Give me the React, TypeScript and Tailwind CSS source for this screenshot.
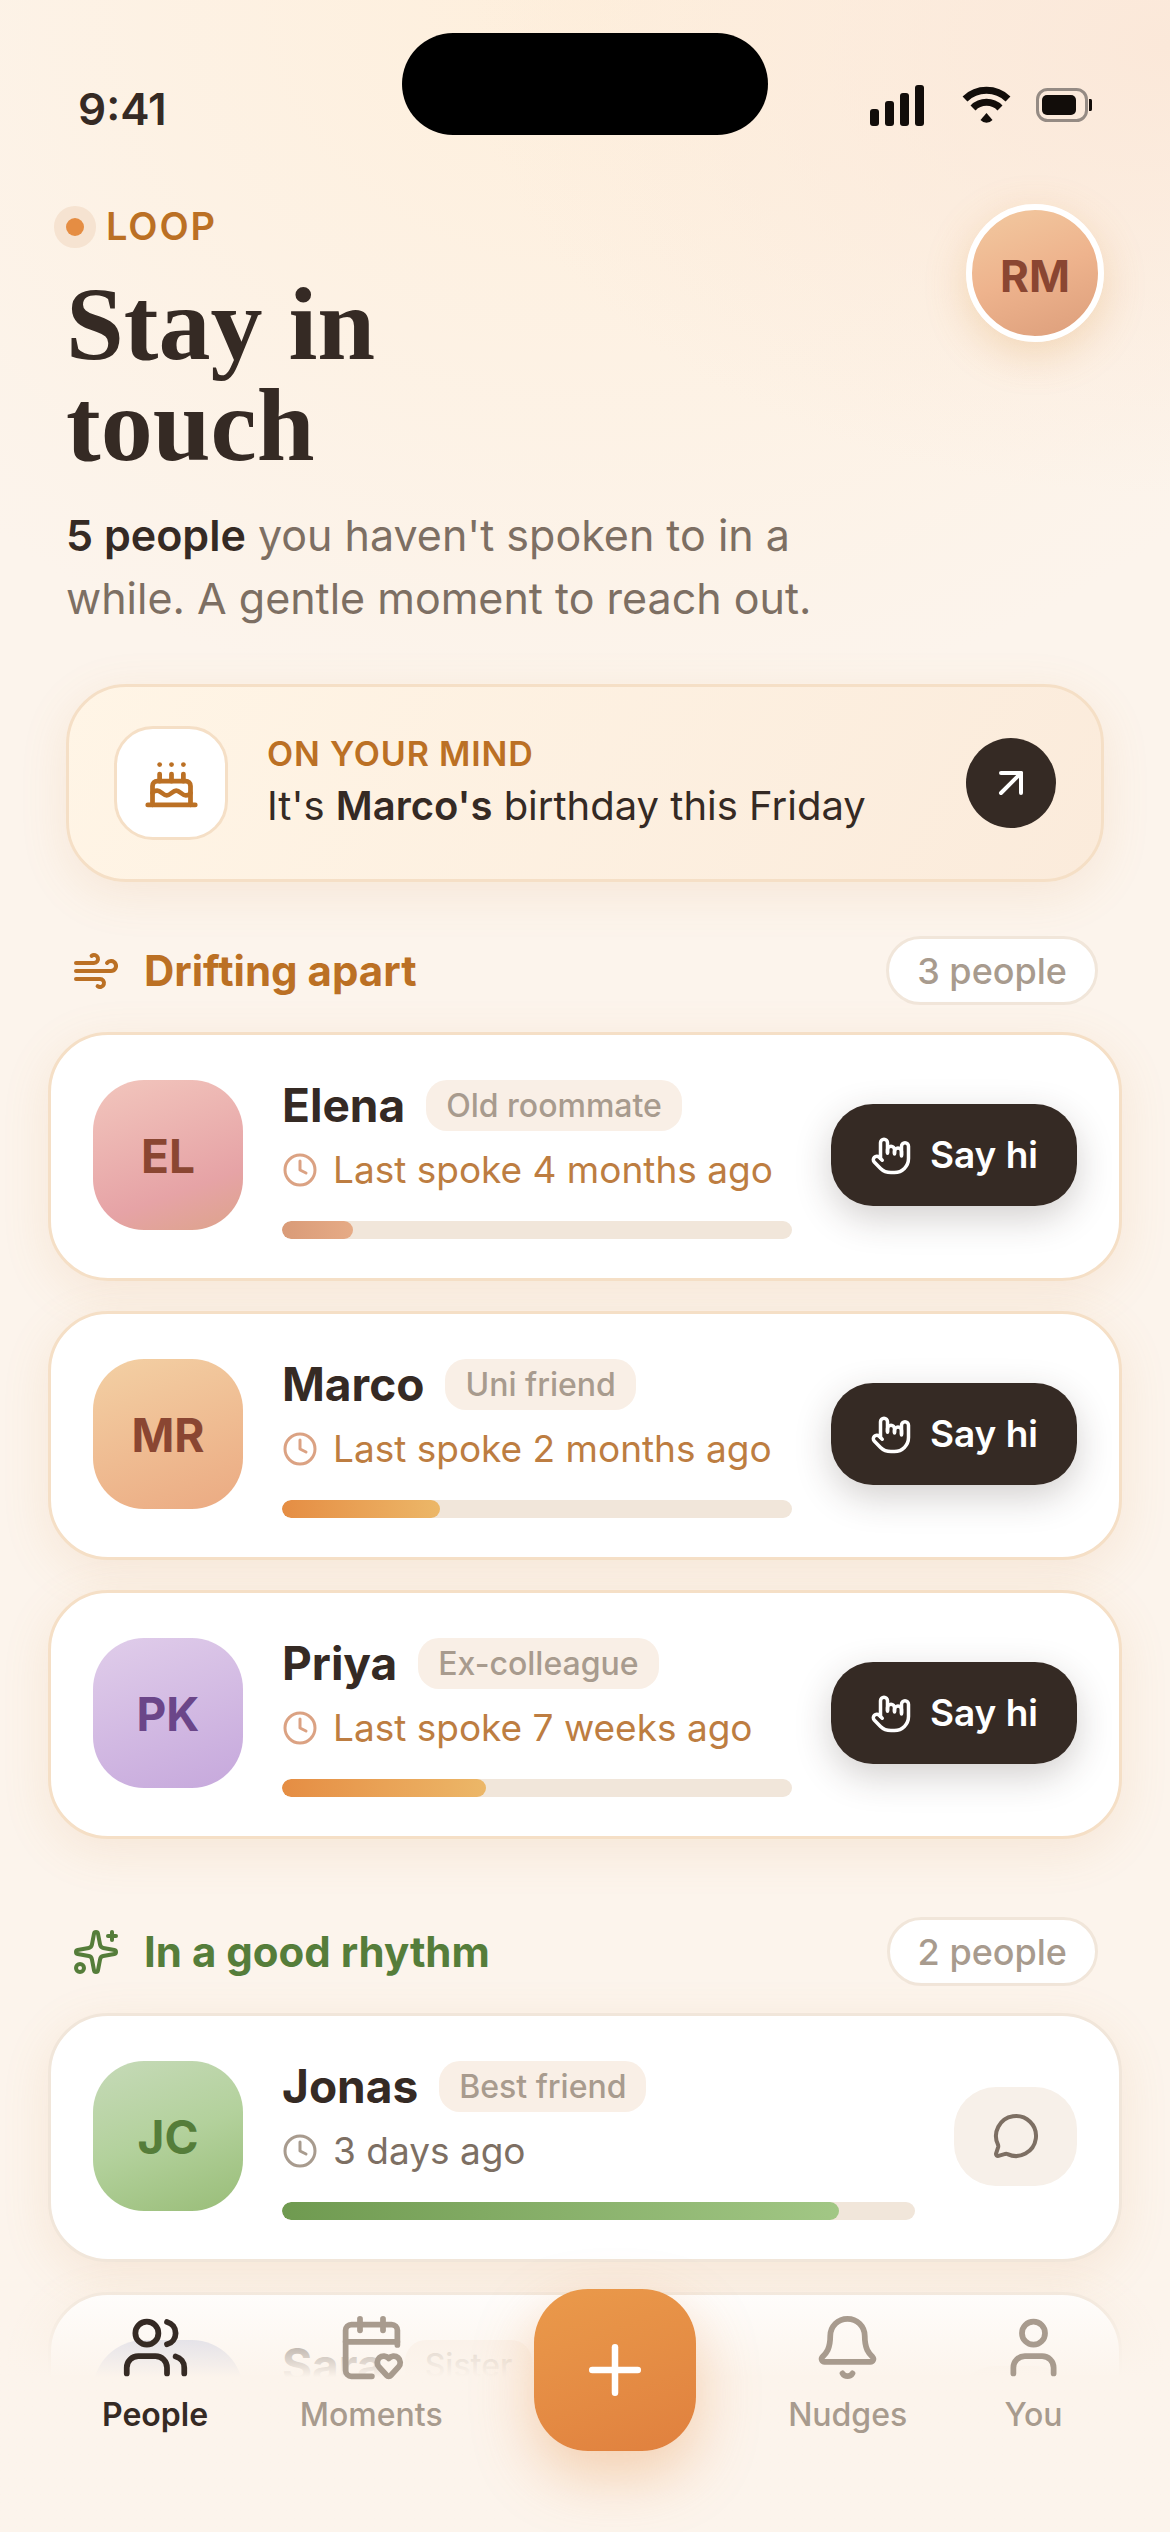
import type { ReactNode } from "react";
import {
  ArrowUpRight,
  Bell,
  Cake,
  CalendarHeart,
  Clock,
  HandMetal,
  MessageCircle,
  Plus,
  Sparkles,
  User,
  Users,
  Wind,
} from "lucide-react";
import type { LucideIcon } from "lucide-react";
import clsx from "clsx";

interface Person {
  initials?: string;
  name: string;
  tag: string;
  meta?: string;
  closeness: number;
  avatar: string;
  bar: string;
  drifting: boolean;
}

const DRIFTING: Person[] = [
  {
    initials: "EL",
    name: "Elena",
    tag: "Old roommate",
    meta: "Last spoke 4 months ago",
    closeness: 14,
    avatar: "from-[#f2c6bd] via-[#e6a3a6] via-70% to-[#dda38a] text-[#8a4632]",
    bar: "from-[#d99b78] to-[#e6ab86]",
    drifting: true,
  },
  {
    initials: "MR",
    name: "Marco",
    tag: "Uni friend",
    meta: "Last spoke 2 months ago",
    closeness: 31,
    avatar: "from-[#f3d0a4] to-[#ebaa82] text-[#8a4632]",
    bar: "from-[#e58d43] to-[#ecb768]",
    drifting: true,
  },
  {
    initials: "PK",
    name: "Priya",
    tag: "Ex-colleague",
    meta: "Last spoke 7 weeks ago",
    closeness: 40,
    avatar: "from-[#e0cdea] to-[#c6a8dc] text-[#6b4689]",
    bar: "from-[#e58d43] to-[#ecb768]",
    drifting: true,
  },
];

const STEADY: Person[] = [
  {
    initials: "JC",
    name: "Jonas",
    tag: "Best friend",
    meta: "3 days ago",
    closeness: 88,
    avatar: "from-[#c6dab8] via-[#b3d19c] to-[#99bd78] text-[#557d3a]",
    bar: "from-[#6f9a50] to-[#a2c785]",
    drifting: false,
  },
  {
    name: "Sara",
    tag: "Sister",
    closeness: 94,
    avatar: "from-[#c3cbe6] to-[#a3b0d8] text-[#46568a]",
    bar: "from-[#6f9a50] to-[#a2c785]",
    drifting: false,
  },
];

function StatusBar() {
  return (
    <div className="relative flex h-[180px] items-start justify-between pt-[84px] pr-[76px] pl-[78px]">
      <span className="text-[44px] leading-[50px] font-semibold">9:41</span>
      <div className="absolute top-[33px] left-1/2 h-[102px] w-[366px] -translate-x-1/2 rounded-full bg-black" />
      <svg className="h-[48px] w-[226px]" viewBox="0 0 226 48" fill="none">
        {/* signal */}
        <g fill="#120d0a">
          <rect x="2" y="25" width="9" height="17" rx="3" />
          <rect x="17" y="17" width="9" height="25" rx="3" />
          <rect x="32" y="9" width="9" height="33" rx="3" />
          <rect x="47" y="1" width="9" height="41" rx="3" />
        </g>
        {/* wifi */}
        <g stroke="#120d0a" strokeWidth="7">
          <path d="M97 15a31 31 0 0 1 43 0" />
          <path d="M105 24a19 19 0 0 1 27 0" />
        </g>
        <path d="M118.500 29l6 7a8 8 0 0 1-12 0z" fill="#120d0a" />
        {/* battery */}
        <rect x="169.500" y="5.500" width="49" height="31" rx="10" stroke="#958b84" strokeWidth="3" />
        <rect x="174" y="11" width="34" height="20" rx="5" fill="#120d0a" />
        <path d="M221 15h2a2 2 0 0 1 1 2v8a2 2 0 0 1-1 2h-2z" fill="#120d0a" />
      </svg>
    </div>
  );
}

function SectionHead({ icon: Icon, title, count, tone }: { icon: LucideIcon; title: string; count: string; tone: string }) {
  return (
    <div className="-mb-[3px] flex h-[69px] items-center justify-between px-6">
      <h2 className={clsx("flex items-center gap-[24px] text-[42px] leading-[60px] font-bold", tone)}>
        <Icon size={48} strokeWidth={2} />
        {title}
      </h2>
      <span className="flex h-[69px] items-center rounded-full border-3 border-[#f1e6da] bg-white px-[28px] text-[36px] font-medium text-[#a89b8e]">
        {count}
      </span>
    </div>
  );
}

function PersonCard({ person }: { person: Person }) {
  return (
    <article
      className={clsx(
        "flex items-start rounded-[60px] border-3 bg-white px-[42px] pt-[45px] pb-[39px] shadow-[0_12px_48px_rgba(206,150,80,0.13)]",
        person.drifting ? "border-[#f5dfc6]" : "border-[#f1e6da]"
      )}
    >
      <div
        className={clsx(
          "flex size-[150px] shrink-0 items-center justify-center rounded-[51px] bg-linear-160 pt-[3px] text-[46px] font-bold",
          person.avatar
        )}
      >
        {person.initials}
      </div>
      <div className="ml-[39px] min-w-0 flex-1">
        <div className="flex h-[51px] items-center gap-[21px]">
          <h3 className="text-[46px] leading-[51px] font-bold">{person.name}</h3>
          <span className="flex h-[51px] items-center rounded-[21px] bg-[#f9efe6] px-[20px] text-[32px] font-medium text-[#a89b8e]">
            {person.tag}
          </span>
        </div>
        <p
          className={clsx(
            "mt-[15px] flex h-[48px] items-center gap-[15px] text-[37px] whitespace-nowrap",
            person.drifting ? "text-[#bd7d41]" : "text-[#7d6f63]"
          )}
        >
          <Clock size={36} strokeWidth={2} className={clsx("shrink-0", person.drifting ? "text-[#dba283]" : "text-[#a89b8e]")} />
          {person.meta}
        </p>
        <div className="mt-[27px] h-[18px] overflow-hidden rounded-full bg-[#f1e6da]">
          <div className={clsx("h-full rounded-full bg-linear-to-r", person.bar)} style={{ width: `${person.closeness}%` }} />
        </div>
      </div>
      <div className="ml-[39px] flex h-[150px] shrink-0 items-center">
        {person.drifting ? (
          <button
            type="button"
            className="flex h-[102px] w-[246px] items-center justify-center gap-[18px] rounded-[42px] bg-[#352a24] text-[37px] font-semibold text-white shadow-[0_12px_36px_rgba(53,42,36,0.22)]"
          >
            <HandMetal size={42} strokeWidth={2} />
            Say hi
          </button>
        ) : (
          <button
            type="button"
            aria-label={`Message ${person.name}`}
            className="flex h-[99px] w-[123px] items-center justify-center rounded-[42px] bg-[#f7f0e9] text-[#7d6f63]"
          >
            <MessageCircle size={48} strokeWidth={2} />
          </button>
        )}
      </div>
    </article>
  );
}

function NavItem({ icon: Icon, label, active = false }: { icon: LucideIcon; label: string; active?: boolean }) {
  return (
    <a
      href={`#${label.toLowerCase()}`}
      className={clsx(
        "mt-[24px] flex min-w-[69px] flex-col items-center gap-[12px] text-[32px] leading-[42px]",
        active ? "font-semibold text-[#352a24]" : "font-medium text-[#a89b8e]"
      )}
    >
      <Icon size={69} strokeWidth={2} />
      {label}
    </a>
  );
}

function Section({ children }: { children: ReactNode }) {
  return <section className="flex flex-col gap-[30px]">{children}</section>;
}

export default function App() {
  return (
    <div className="relative h-screen overflow-hidden bg-[#fcf4ec] font-['Inter',sans-serif] text-[#352a24]">
      <div className="absolute inset-x-0 top-0 h-[900px] bg-[radial-gradient(ellipse_60%_50%_at_100%_5%,#fbe8d9_0%,transparent_100%),radial-gradient(ellipse_75%_80%_at_50%_0%,#feefdc_0%,transparent_100%)]" />

      <div className="relative">
        <StatusBar />

        <header className="flex items-start justify-between px-[66px]">
          <div>
            <div className="flex h-[93px] items-center gap-[22px] text-[38px] font-semibold tracking-wider text-[#bb7024]">
              <span className="size-[18px] rounded-full bg-[#e58d43] ring-12 ring-[#f6e3d1]" />
              LOOP
            </div>
            <h1 className="w-[400px] font-['Liberation_Serif',serif] text-[104px] leading-[101px] font-bold">
              Stay in touch
            </h1>
            <p className="mt-[29px] w-[800px] text-[43px] leading-[63px] text-[#7d6f63]">
              <strong className="font-semibold text-[#352a24]">5 people</strong> you haven't spoken to in a while. A
              gentle moment to reach out.
            </p>
          </div>
          <button
            type="button"
            className="mt-[24px] flex size-[138px] shrink-0 items-center justify-center rounded-full border-6 border-white bg-linear-160 from-[#f2c9a0] via-[#eeb38d] to-[#dc9e7b] pt-[6px] text-[44px] font-bold text-[#8a4632] shadow-[0_12px_42px_rgba(220,150,70,0.28)]"
          >
            RM
          </button>
        </header>

        <a
          href="#marco"
          className="mx-[66px] mt-[54px] flex h-[198px] items-center rounded-[60px] border-3 border-[#f5dfc6] bg-linear-120 from-[#fff5e6] to-[#fbebdb] px-[45px] shadow-[0_12px_48px_rgba(206,150,80,0.13)]"
        >
          <span className="flex size-[114px] shrink-0 items-center justify-center rounded-[39px] border-3 border-[#f5dfc6] bg-white text-[#bb7024]">
            <Cake size={57} strokeWidth={2} />
          </span>
          <span className="ml-[39px] flex flex-1 flex-col">
            <span className="text-[34px] leading-[45px] font-semibold tracking-wide text-[#bb7024]">ON YOUR MIND</span>
            <span className="text-[40px] leading-[60px]">
              It's <strong className="font-semibold">Marco's</strong> birthday this Friday
            </span>
          </span>
          <span className="flex size-[90px] shrink-0 items-center justify-center rounded-full bg-[#352a24] text-white">
            <ArrowUpRight size={48} strokeWidth={2} />
          </span>
        </a>

        <main className="mt-[54px] flex flex-col gap-[78px] px-[48px]">
          <Section>
            <SectionHead icon={Wind} title="Drifting apart" count="3 people" tone="text-[#bb7024]" />
            {DRIFTING.map((p) => (
              <PersonCard key={p.name} person={p} />
            ))}
          </Section>
          <Section>
            <SectionHead icon={Sparkles} title="In a good rhythm" count="2 people" tone="text-[#557d3a]" />
            {STEADY.map((p) => (
              <PersonCard key={p.name} person={p} />
            ))}
          </Section>
        </main>
      </div>

      {/* tab bar, fades over the list */}
      <nav className="absolute inset-x-0 bottom-0 flex h-[258px] items-start justify-between bg-linear-to-b from-transparent to-[#fcf4ec] to-40% px-[102px] pt-[15px]">
        <NavItem icon={Users} label="People" active />
        <NavItem icon={CalendarHeart} label="Moments" />
        <button
          type="button"
          aria-label="Add"
          className="flex size-[162px] items-center justify-center rounded-[54px] bg-linear-160 from-[#ea9a4b] to-[#e0803e] text-white shadow-[0_24px_60px_rgba(229,141,67,0.36)]"
        >
          <Plus size={78} strokeWidth={2} />
        </button>
        <NavItem icon={Bell} label="Nudges" />
        <NavItem icon={User} label="You" />
      </nav>
    </div>
  );
}
